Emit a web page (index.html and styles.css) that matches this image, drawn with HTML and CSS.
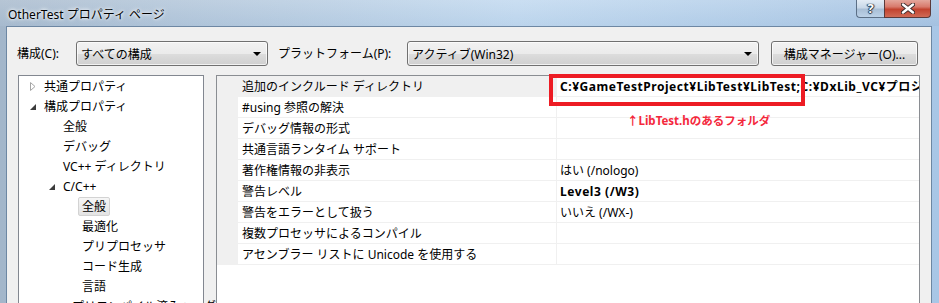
FILE: index.html
```html
<!DOCTYPE html>
<html lang="ja">
<head>
  <meta charset="UTF-8" />
  <title>OtherTest プロパティ ページ</title>
  <link rel="stylesheet" href="styles.css">
</head>
<body>
  <div class="window">
    <!-- Title bar -->
    <div class="titlebar">
      <span class="title">OtherTest プロパティ ページ</span>
      <div class="caption">
        <span class="cap-help">?</span>
        <span class="cap-close">
          <svg width="14" height="11" viewBox="0 0 14 11">
            <path d="M2 1.5 L12 9.5 M12 1.5 L2 9.5" stroke="#3a2a2a" stroke-width="4.2" stroke-linecap="round"/>
            <path d="M2 1.5 L12 9.5 M12 1.5 L2 9.5" stroke="#fff" stroke-width="2.4" stroke-linecap="round"/>
          </svg>
        </span>
      </div>
    </div>

    <div class="frame">
      <div class="client">
        <!-- Configuration / platform bar -->
        <div class="toolbar">
          <label class="tb-label config-label">構成(C):</label>
          <div class="combo config-combo">
            <span>すべての構成</span>
            <i class="drop"></i>
          </div>
          <label class="tb-label platform-label">プラットフォーム(P):</label>
          <div class="combo platform-combo">
            <span>アクティブ(Win32)</span>
            <i class="drop"></i>
          </div>
          <button class="btn">構成マネージャー(O)...</button>
        </div>

        <div class="panes">
          <!-- LEFT: property tree -->
          <ul class="tree">
            <li class="lv0"><span class="exp"><svg width="6" height="9"><path d="M0.5 0.5 L5 4.5 L0.5 8.5 Z" fill="none" stroke="#a6a6a6"/></svg></span><span class="txt">共通プロパティ</span></li>
            <li class="lv0"><span class="exp"><svg width="6" height="9"><path d="M6 2 L6 8 L0 8 Z" fill="#3c3c3c"/></svg></span><span class="txt">構成プロパティ</span></li>
            <li class="lv1"><span class="exp"></span><span class="txt">全般</span></li>
            <li class="lv1"><span class="exp"></span><span class="txt">デバッグ</span></li>
            <li class="lv1"><span class="exp"></span><span class="txt">VC++ ディレクトリ</span></li>
            <li class="lv1"><span class="exp"><svg width="6" height="9"><path d="M6 2 L6 8 L0 8 Z" fill="#3c3c3c"/></svg></span><span class="txt">C/C++</span></li>
            <li class="lv2"><span class="exp"></span><span class="txt selected">全般</span></li>
            <li class="lv2"><span class="exp"></span><span class="txt">最適化</span></li>
            <li class="lv2"><span class="exp"></span><span class="txt">プリプロセッサ</span></li>
            <li class="lv2"><span class="exp"></span><span class="txt">コード生成</span></li>
            <li class="lv2"><span class="exp"></span><span class="txt">言語</span></li>
            <li class="lv2"><span class="exp"></span><span class="txt">プリコンパイル済みヘッダー</span></li>
          </ul>

          <!-- RIGHT: property grid -->
          <div class="grid">
            <div class="row current">
              <div class="gutter"></div>
              <div class="name">追加のインクルード ディレクトリ</div>
              <div class="value bold">C:¥GameTestProject¥LibTest¥LibTest;C:¥DxLib_VC¥プロジェクトに追加すべきファイル_VC用;%(AdditionalIncludeDirectories)</div>
            </div>
            <div class="row">
              <div class="gutter"></div>
              <div class="name">#using 参照の解決</div>
              <div class="value"></div>
            </div>
            <div class="row">
              <div class="gutter"></div>
              <div class="name">デバッグ情報の形式</div>
              <div class="value"></div>
            </div>
            <div class="row">
              <div class="gutter"></div>
              <div class="name">共通言語ランタイム サポート</div>
              <div class="value"></div>
            </div>
            <div class="row">
              <div class="gutter"></div>
              <div class="name">著作権情報の非表示</div>
              <div class="value">はい (/nologo)</div>
            </div>
            <div class="row">
              <div class="gutter"></div>
              <div class="name">警告レベル</div>
              <div class="value bold">Level3 (/W3)</div>
            </div>
            <div class="row">
              <div class="gutter"></div>
              <div class="name">警告をエラーとして扱う</div>
              <div class="value">いいえ (/WX-)</div>
            </div>
            <div class="row">
              <div class="gutter"></div>
              <div class="name">複数プロセッサによるコンパイル</div>
              <div class="value"></div>
            </div>
            <div class="row">
              <div class="gutter"></div>
              <div class="name">アセンブラー リストに Unicode を使用する</div>
              <div class="value"></div>
            </div>

            <!-- annotation drawn over the grid -->
            <div class="mark-box"></div>
            <div class="mark-note">↑LibTest.hのあるフォルダ</div>
          </div>
        </div>
      </div>
    </div>
  </div>
</body>
</html>
```

FILE: styles.css
```css
/* ==========================
   PAGE & WINDOW FRAME
=========================== */
* {
  box-sizing: border-box;
}

body {
  margin: 0;
  font-family: "Noto Sans", "Noto Sans CJK JP", sans-serif;
  font-size: 12px;
  color: #000;
  background: #a9c4df;
  overflow: hidden;
}

.window {
  width: 939px;
  height: 303px;
  overflow: hidden;
  display: flex;
  flex-direction: column;
  background: linear-gradient(to right, #a3b6ca 0%, #b4cbe2 40%, #b9d3ec 70%, #a8c6e6 100%);
}

/* ==========================
   TITLE BAR
=========================== */
.titlebar {
  flex-shrink: 0;
  height: 26px;
  display: flex;
  align-items: flex-start;
  background:
    linear-gradient(to bottom, rgba(255, 255, 255, 0.12), rgba(120, 160, 200, 0.1)),
    linear-gradient(to right, #acbdcf 0%, #b9cde1 30%, #c3daf0 55%, #b6d0ea 80%, #a9c5e3 100%);
}

.title {
  padding: 7px 0 0 8px;
  line-height: 16px;
  text-shadow: 0 0 5px #fff, 0 0 3px #fff;
}

.caption {
  margin-left: auto;
  margin-right: 8px;
  display: flex;
}

.cap-help {
  width: 28px;
  height: 18px;
  border: 1px solid #5b6f86;
  border-top: none;
  border-right: none;
  border-radius: 0 0 0 4px;
  background: linear-gradient(to bottom, #e3ecf5 0%, #c9d8e8 45%, #a9bfd6 55%, #bcd2e8 100%);
  color: #fff;
  font-weight: bold;
  font-size: 13px;
  line-height: 16px;
  text-align: center;
  text-shadow: 0 0 1px #22354a, 1px 0 1px #22354a, -1px 0 1px #22354a, 0 1px 1px #22354a;
}

.cap-close {
  width: 47px;
  height: 18px;
  border: 1px solid #5b3a3a;
  border-top: none;
  border-radius: 0 0 4px 0;
  background: linear-gradient(to bottom, #e4a79c 0%, #d87a6c 40%, #c2432f 55%, #d06a55 100%);
  display: flex;
  justify-content: center;
  align-items: center;
}

.frame {
  flex: 1;
  min-height: 0;
  display: flex;
  padding: 0 7px 0 6px;
}

.client {
  flex: 1;
  min-height: 0;
  overflow: hidden;
  background: #f0f0f0;
  border: 1px solid #6d87a3;
  border-bottom: none;
  display: flex;
  flex-direction: column;
}

/* ==========================
   CONFIGURATION BAR
=========================== */
.toolbar {
  flex-shrink: 0;
  display: flex;
  align-items: center;
  padding: 14px 0 0 10px;
}

.tb-label {
  line-height: 25px;
}

.config-label {
  width: 59px;
}

.platform-label {
  width: 129px;
  margin-left: 10px;
}

.combo,
.btn {
  height: 25px;
  border: 1px solid #707070;
  border-radius: 3px;
  background: linear-gradient(to bottom, #f2f2f2 0%, #ebebeb 50%, #dddddd 51%, #cfcfcf 100%);
  box-shadow: inset 0 0 0 1px rgba(255, 255, 255, 0.7);
}

.combo {
  display: flex;
  align-items: center;
  padding: 0 6px 0 4px;
}

.config-combo {
  width: 192px;
}

.platform-combo {
  width: 352px;
}

.combo .drop {
  margin-left: auto;
  width: 0;
  height: 0;
  border-left: 4px solid transparent;
  border-right: 4px solid transparent;
  border-top: 4px solid #000;
}

.btn {
  width: 147px;
  margin-left: 12px;
  font: inherit;
  padding: 0;
  color: #000;
}

/* ==========================
   PANES
=========================== */
.panes {
  flex-shrink: 0;
  display: flex;
  gap: 12px;
  margin-top: 9px;
  padding-left: 11px;
}

.tree {
  list-style: none;
  margin: 0;
  padding: 0;
  width: 186px;
  height: 260px;
  background: #fff;
  border: 1px solid #828790;
}

.tree li {
  display: flex;
  align-items: center;
  height: 20px;
  padding-top: 1px;
  white-space: nowrap;
}

.tree .lv0 { padding-left: 6px; }
.tree .lv1 { padding-left: 25px; }
.tree .lv2 { padding-left: 44px; }

.exp {
  width: 15px;
  height: 19px;
  display: flex;
  align-items: center;
  padding-left: 5px;
}

.txt {
  padding: 0 3px;
  border: 1px solid transparent;
  line-height: 17px;
}

.txt.selected {
  background: linear-gradient(to bottom, #f6f6f6, #e3e3e3);
  border-color: #d3d3d3;
  border-radius: 2px;
}

/* ==========================
   PROPERTY GRID
=========================== */
.grid {
  position: relative;
  width: 704px;
  height: 260px;
  background: #fff;
  border: 1px solid #8a8d92;
}

.row {
  display: grid;
  grid-template-columns: 21px 319px 1fr;
  height: 21px;
}

.gutter {
  background: #f0f0f0;
}

.name,
.value {
  border-bottom: 1px solid #f0f0f0;
  padding-top: 2px;
  line-height: 18px;
  white-space: nowrap;
  overflow: hidden;
}

.name {
  padding-left: 4px;
  border-right: 1px solid #f0f0f0;
}

.value {
  padding-left: 3px;
}

.row.current .name {
  background: #f0f0f0;
}

.bold {
  font-weight: bold;
  letter-spacing: 0.55px;
}

/* red annotation on top of the grid */
.mark-box {
  position: absolute;
  left: 332px;
  top: -2px;
  width: 256px;
  height: 32px;
  border: 4px solid #ed1c24;
}

.mark-note {
  position: absolute;
  left: 410px;
  top: 37px;
  color: #f4283c;
  font-size: 11.5px;
  font-weight: bold;
  line-height: 16px;
}
```
